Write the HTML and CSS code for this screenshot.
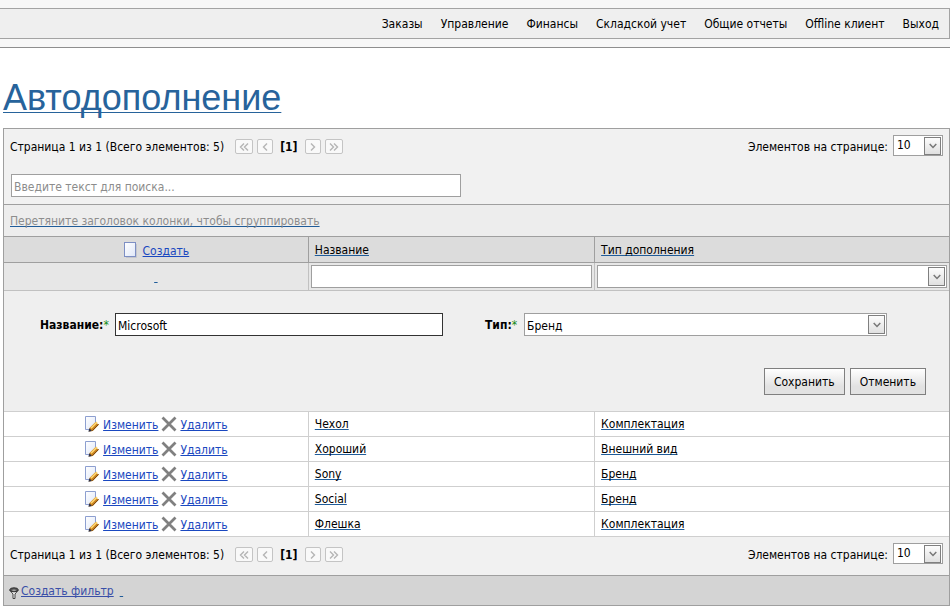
FILE: index.html
```html
<!DOCTYPE html>
<html lang="ru">
<head>
<meta charset="utf-8">
<title>Автодополнение</title>
<link rel="stylesheet" href="styles.css">
</head>
<body>
<svg class="sprite" aria-hidden="true">
  <defs>
    <linearGradient id="paper" x1="0" y1="0" x2="1" y2="1"><stop offset="0" stop-color="#ffffff"/><stop offset="1" stop-color="#dfe7f8"/></linearGradient>
    <symbol id="i-new" viewBox="0 0 16 18"><path d="M3 16.500h10.500V3" fill="none" stroke="#c4c6cc"/><rect x="1.500" y="1.500" width="11" height="14" fill="url(#paper)" stroke="#7d8fc4"/></symbol>
    <symbol id="i-edit" viewBox="0 0 16 16"><path d="M1.500 .5h10v9l-4 4h-6z" fill="url(#paper)" stroke="#8d9fd0"/><path d="M5.500 12l6-6 3.300 2.800-6 6.200-3.800 .6z" fill="#c9821f"/><path d="M7 12.300l6-6.200" stroke="#ffd873" stroke-width="1.600"/><path d="M8.400 14.700l6.200-6.400" stroke="#7c4a12" stroke-width="1"/><path d="M5.300 12.300l-.9 3.500 3.600-.9z" fill="#2b3047"/></symbol>
    <symbol id="i-del" viewBox="0 0 16 16"><path d="M1.500 1.500l13 13M14.500 1.500l-13 13" stroke="#808080" stroke-width="2.800" fill="none"/></symbol>
    <symbol id="i-down" viewBox="0 0 8 6"><path d="M.7 1l3.300 3.500L7.300 1" stroke="#777" stroke-width="1.500" fill="none"/></symbol>
    <symbol id="i-prev" viewBox="0 0 8 8"><path d="M6 .5L2.500 4 6 7.500" stroke="#b4b4b4" stroke-width="1.400" fill="none"/></symbol>
    <symbol id="i-next" viewBox="0 0 8 8"><path d="M2 .5L5.500 4 2 7.500" stroke="#b4b4b4" stroke-width="1.400" fill="none"/></symbol>
    <symbol id="i-first" viewBox="0 0 10 8"><path d="M5 .5L1.500 4 5 7.500M9 .5L5.500 4 9 7.500" stroke="#b4b4b4" stroke-width="1.400" fill="none"/></symbol>
    <symbol id="i-last" viewBox="0 0 10 8"><path d="M1 .5L4.500 4 1 7.500M5 .5L8.500 4 5 7.500" stroke="#b4b4b4" stroke-width="1.400" fill="none"/></symbol>
    <symbol id="i-filter" viewBox="0 0 10 12"><path d="M.7 3.200L4 7v4.500h2V7l3.300-3.800z" fill="#f4f4f4" stroke="#444"/><ellipse cx="5" cy="2.800" rx="4.200" ry="2" fill="#555" stroke="#333"/><ellipse cx="5" cy="3.300" rx="2" ry=".8" fill="#aaa"/></symbol>
  </defs>
</svg>

<header class="top">
  <nav class="menu">
    <a href="#">Заказы</a>
    <a href="#">Управление</a>
    <a href="#">Финансы</a>
    <a href="#">Складской учет</a>
    <a href="#">Общие отчеты</a>
    <a href="#">Offline клиент</a>
    <a href="#">Выход</a>
  </nav>
</header>

<main>
  <h1><a href="#">Автодополнение</a></h1>

  <div class="grid">
    <div class="pager">
      <span class="summary">Страница 1 из 1 (Всего элементов: 5)</span>
      <button class="page wide" disabled aria-label="Первая"><svg><use href="#i-first"/></svg></button>
      <button class="page" disabled aria-label="Предыдущая"><svg><use href="#i-prev"/></svg></button>
      <b class="current">[1]</b>
      <button class="page" disabled aria-label="Следующая"><svg><use href="#i-next"/></svg></button>
      <button class="page wide" disabled aria-label="Последняя"><svg><use href="#i-last"/></svg></button>
      <label class="size-label" for="size-top">Элементов на странице:</label>
      <span class="combo small"><select id="size-top"><option>10</option></select><i><svg><use href="#i-down"/></svg></i></span>
    </div>
    <div class="search"><input type="search" class="field" aria-label="Поиск" placeholder="Введите текст для поиска..."></div>
    <div class="group"><a href="#">Перетяните заголовок колонки, чтобы сгруппировать</a></div>

    <table>
      <colgroup><col class="c-cmd"><col class="c-name"><col class="c-type"></colgroup>
      <thead>
        <tr class="heads">
          <th><span class="create"><svg><use href="#i-new"/></svg><a class="cmd" href="#">Создать</a></span></th>
          <th><a href="#">Название</a></th>
          <th><a href="#">Тип дополнения</a></th>
        </tr>
        <tr class="filters">
          <td><a href="#" aria-label="Очистить">&nbsp;</a></td>
          <td><input class="field" type="text" aria-label="Фильтр по названию"></td>
          <td><span class="combo"><select aria-label="Фильтр по типу"><option></option></select><i><svg><use href="#i-down"/></svg></i></span></td>
        </tr>
      </thead>
      <tbody>
        <tr class="edit">
          <td colspan="3">
            <form>
              <div class="fields">
                <label for="name">Название:<em>*</em></label>
                <input class="field focused" id="name" type="text" value="Microsoft">
                <label class="second" for="type">Тип:<em>*</em></label>
                <span class="combo"><select id="type"><option>Бренд</option></select><i><svg><use href="#i-down"/></svg></i></span>
              </div>
              <div class="actions">
                <button type="button">Сохранить</button>
                <button type="button">Отменить</button>
              </div>
            </form>
          </td>
        </tr>
        <tr class="row"><td><span class="cmds"><svg><use href="#i-edit"/></svg><a class="cmd" href="#">Изменить</a><svg><use href="#i-del"/></svg><a class="cmd" href="#">Удалить</a></span></td><td><a href="#">Чехол</a></td><td><a href="#">Комплектация</a></td></tr>
        <tr class="row"><td><span class="cmds"><svg><use href="#i-edit"/></svg><a class="cmd" href="#">Изменить</a><svg><use href="#i-del"/></svg><a class="cmd" href="#">Удалить</a></span></td><td><a href="#">Хороший</a></td><td><a href="#">Внешний вид</a></td></tr>
        <tr class="row"><td><span class="cmds"><svg><use href="#i-edit"/></svg><a class="cmd" href="#">Изменить</a><svg><use href="#i-del"/></svg><a class="cmd" href="#">Удалить</a></span></td><td><a href="#">Sony</a></td><td><a href="#">Бренд</a></td></tr>
        <tr class="row"><td><span class="cmds"><svg><use href="#i-edit"/></svg><a class="cmd" href="#">Изменить</a><svg><use href="#i-del"/></svg><a class="cmd" href="#">Удалить</a></span></td><td><a href="#">Social</a></td><td><a href="#">Бренд</a></td></tr>
        <tr class="row"><td><span class="cmds"><svg><use href="#i-edit"/></svg><a class="cmd" href="#">Изменить</a><svg><use href="#i-del"/></svg><a class="cmd" href="#">Удалить</a></span></td><td><a href="#">Флешка</a></td><td><a href="#">Комплектация</a></td></tr>
      </tbody>
    </table>

    <div class="pager bottom">
      <span class="summary">Страница 1 из 1 (Всего элементов: 5)</span>
      <button class="page wide" disabled aria-label="Первая"><svg><use href="#i-first"/></svg></button>
      <button class="page" disabled aria-label="Предыдущая"><svg><use href="#i-prev"/></svg></button>
      <b class="current">[1]</b>
      <button class="page" disabled aria-label="Следующая"><svg><use href="#i-next"/></svg></button>
      <button class="page wide" disabled aria-label="Последняя"><svg><use href="#i-last"/></svg></button>
      <label class="size-label" for="size-bottom">Элементов на странице:</label>
      <span class="combo small"><select id="size-bottom"><option>10</option></select><i><svg><use href="#i-down"/></svg></i></span>
    </div>
    <div class="filterbar"><svg><use href="#i-filter"/></svg><a class="build" href="#">Создать фильтр</a><a href="#" aria-label="Очистить">&nbsp;</a></div>
  </div>
</main>
</body>
</html>
```
FILE: styles.css
```css
* { box-sizing: border-box; }
body {
  margin: 0 2px 0 0;
  background: #fff;
  color: #000;
  font: 12px/16px "DejaVu Sans Condensed", Tahoma, sans-serif;
}
input, select, button { font: inherit; color: inherit; margin: 0; }
svg { display: block; flex: none; }
.sprite { position: absolute; width: 0; height: 0; }
a { color: #000; text-decoration: underline #1f5c99; text-decoration-skip-ink: none; }
a.cmd { color: #1a48c0; text-decoration-color: currentColor; }

.top { padding: 8px 0; background: #f7f7f7; border-bottom: 1px solid #8e8e8e; }
.menu {
  display: flex; justify-content: flex-end; gap: 18px;
  padding: 7px 10px 6px;
  border: 1px solid #a3a3a3; border-left: 0;
  background: #efefef;
}
.menu a { text-decoration: none; }

main { padding-left: 3px; }
h1 { margin: 29px 0 9px; font: 36px/42px "Liberation Sans", Arial, sans-serif; }
h1 a { color: #27639b; text-decoration: underline 1px; text-underline-offset: 2px; text-decoration-skip-ink: none; }

.grid { border: 1px solid #9f9f9f; background: #f1f1f1; }
.pager { display: flex; align-items: center; min-height: 29px; padding: 6px 6px 0; }
.pager.bottom { min-height: 38px; padding-bottom: 9px; }
.summary { margin-right: 11px; }
.page {
  display: grid; place-items: center;
  width: 16px; height: 15px; padding: 0; margin-right: 4px;
  border: 1px solid #c4c4c4; border-radius: 2px; background: #f9f9f9;
}
.page.wide { width: 18px; }
.page svg { width: 8px; height: 8px; }
.page.wide svg { width: 10px; }
.current { margin: 0 7px 0 3px; }
.size-label { margin-left: auto; margin-right: 5px; }

.field, .combo { display: block; width: 100%; height: 23px; border: 1px solid #9f9f9f; background: #fff; }
.field { padding: 2px 2px 0; outline: 0; border-radius: 0; appearance: none; }
.field::placeholder { color: #8c8c8c; opacity: 1; }
.field.focused { border-color: #333; }
.combo { display: grid; grid-template-columns: 1fr 17px; padding: 1px; }
.combo select {
  grid-area: 1 / 1 / 2 / 3; width: 100%; min-width: 0; padding: 2px 0 0 1px;
  border: 0; outline: 0; background: none; appearance: none;
}
.combo i {
  grid-area: 1 / 2 / 2 / 3; display: grid; place-items: center;
  border: 1px solid #7f7f7f; background: linear-gradient(#fcfcfc, #e0e0e0);
  pointer-events: none;
}
.combo i svg { width: 8px; height: 6px; }
.combo.small { width: 50px; height: 21px; align-self: flex-start; }
.combo.small select { padding: 0 0 2px 2px; }

.search { padding: 16px 7px 7px; }
.search .field { width: 450px; max-width: 100%; }
.group { padding: 8px 6px 7px; border-top: 1px solid #9f9f9f; background: #ededed; }
.group a { color: #8d8d8d; }

table { width: 100%; border-collapse: collapse; table-layout: fixed; }
.c-cmd { width: 32.200%; }
.c-name { width: 30.300%; }
th, td { padding: 0 6px; text-align: left; font-weight: normal; }
th { height: 26px; background: #dcdcdc; border-top: 1px solid #9f9f9f; border-bottom: 1px solid #9f9f9f; }
th + th { border-left: 1px solid #9f9f9f; }
.create { display: flex; align-items: center; justify-content: center; gap: 4px; }
.create svg { width: 16px; height: 18px; }
.filters td { height: 28px; padding: 2px; background: #e7e7e7; border-bottom: 1px solid #c1c1c1; }
.filters td + td { border-left: 1px solid #c1c1c1; }
.filters td:first-child { text-align: center; }
.edit td { padding: 0; background: #efefef; }
form { padding: 22px 23px 16px 36px; }
.fields {
  display: grid; grid-template-columns: 75px 328fr 81px 363fr;
  align-items: center; padding-right: 39px;
}
.fields label { font-weight: bold; }
.fields .second { padding-left: 42px; }
em { font-style: normal; font-weight: normal; color: #138a13; }
.actions { display: flex; justify-content: flex-end; gap: 5px; margin-top: 32px; }
.actions button {
  height: 27px; padding: 0 9px;
  border: 1px solid #7f7f7f; border-radius: 0;
  background: linear-gradient(#fff, #e2e2e2 70%);
}
.row td { height: 25px; background: #fff; border-top: 1px solid #cfcfcf; border-bottom: 1px solid #cfcfcf; }
.row td + td { border-left: 1px solid #cfcfcf; }
.cmds { display: flex; align-items: center; justify-content: center; gap: 3px; }
.cmds svg { width: 16px; height: 16px; }
.create a, .cmds a { padding-top: 2px; }

.filterbar {
  display: flex; align-items: center; gap: 2px; height: 30px; padding: 0 5px;
  border-top: 1px solid #9f9f9f; background: #d4d4d4;
}
.filterbar svg { width: 10px; height: 12px; margin-top: 4px; }
.filterbar .build { color: #394fa8; text-decoration-color: currentColor; margin-right: 4px; }
```
